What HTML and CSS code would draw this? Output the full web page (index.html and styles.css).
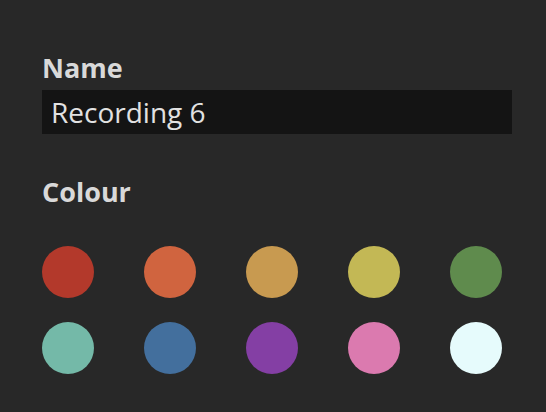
FILE: index.html
```html
<!DOCTYPE html>
<html lang="en">
<head>
<meta charset="utf-8">
<title>Recording</title>
<link rel="stylesheet" href="styles.css">
</head>
<body>
<div class="panel">
  <div class="label">Name</div>
  <div class="field">Recording 6</div>
  <div class="label label-colour">Colour</div>
  <div class="swatches">
    <span class="swatch red"></span>
    <span class="swatch orange"></span>
    <span class="swatch tan"></span>
    <span class="swatch yellow"></span>
    <span class="swatch green"></span>
    <span class="swatch teal"></span>
    <span class="swatch blue"></span>
    <span class="swatch purple"></span>
    <span class="swatch pink"></span>
    <span class="swatch white"></span>
  </div>
</div>
</body>
</html>
```

FILE: styles.css
```css
html, body {
  margin: 0;
  padding: 0;
  background: #282828;
}
body {
  width: 546px;
  height: 412px;
  overflow: hidden;
  font-family: "Open Sans", "Noto Sans", sans-serif;
}
.panel {
  padding: 52px 34px 0 42px;
}
.label {
  font-size: 27px;
  line-height: 32px;
  font-weight: 700;
  color: #d9d9d9;
  margin-bottom: 6px;
}
.field {
  height: 44px;
  box-sizing: border-box;
  padding: 1px 0 0 9px;
  line-height: 42px;
  font-size: 28px;
  color: #e2e2e2;
  background: #141414;
}
.label-colour {
  margin-top: 42px;
  margin-bottom: 38px;
}
.swatches {
  display: grid;
  grid-template-columns: repeat(5, 52px);
  grid-auto-rows: 52px;
  column-gap: 50px;
  row-gap: 24px;
}
.swatch {
  display: block;
  width: 52px;
  height: 52px;
  border-radius: 50%;
}
.red { background: #b3392b; }
.orange { background: #d0643f; }
.tan { background: #c89a50; }
.yellow { background: #c3b855; }
.green { background: #5f8b4d; }
.teal { background: #74b9a8; }
.blue { background: #436f9d; }
.purple { background: #843fa4; }
.pink { background: #db7aaf; }
.white { background: #e6fbfc; }
```
